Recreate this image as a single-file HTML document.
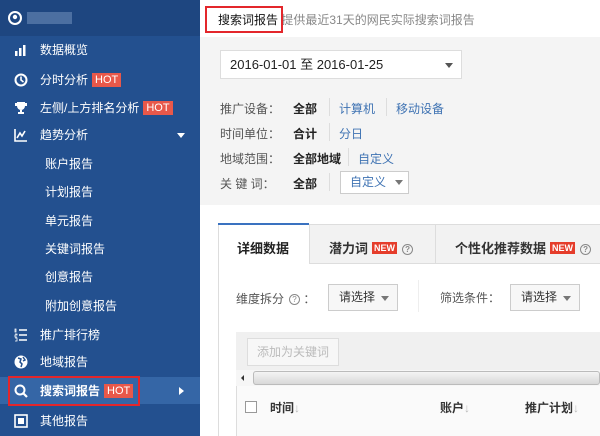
<!DOCTYPE html>
<html><head><meta charset="utf-8"><style>
*{margin:0;padding:0;box-sizing:border-box}
body{width:600px;height:436px;overflow:hidden;position:relative;font-family:"Liberation Sans","Noto Sans CJK SC",sans-serif;font-size:12px;background:#fff}
.sb{position:absolute;left:0;top:0;width:200px;height:436px;background:#23508f;color:#fff}
.sbh{position:absolute;left:0;top:0;width:200px;height:36px;background:#1e4680}
.it{position:absolute;left:0;width:200px;height:28px;line-height:28px;font-size:12px;color:#fff}
.it .ic{position:absolute;left:14px;top:7px;width:14px;height:14px}
.it .t{position:absolute;left:40px}
.sub .t{left:45px}
.hot{display:inline-block;background:#e8584a;color:#fff;font-size:11px;line-height:14px;padding:0 3px;margin-left:4px;vertical-align:1px}
.a{position:absolute}
.lbl{position:absolute;left:220px;color:#555}
.lnk{color:#3f73b3}
.b{font-weight:bold;color:#222}
.sep{position:absolute;width:1px;height:18px;background:#ddd}
.new{display:inline-block;background:#e53d2b;color:#fff;font-size:9px;line-height:12px;padding:0 2px;margin-left:4px;vertical-align:2px}
.q{display:inline-block;width:11px;height:11px;border:1px solid #888;border-radius:50%;font-size:8px;line-height:9px;text-align:center;color:#888;margin-left:5px;vertical-align:1px}
.sel{position:absolute;background:#f7f7f7;border:1px solid #ccc;height:27px;line-height:25px;padding-left:10px;color:#333;font-size:12px}
.tri{display:inline-block;width:0;height:0;border-left:4px solid transparent;border-right:4px solid transparent;border-top:5px solid #555}
</style></head><body>
<div class="sb">
<div class="sbh">
<svg class="a" style="left:8px;top:11px" width="14" height="14" viewBox="0 0 14 14"><circle cx="7" cy="7" r="6" fill="none" stroke="#fff" stroke-width="2"/><circle cx="7" cy="6" r="2.2" fill="#fff"/></svg>
<div class="a" style="left:27px;top:12px;width:45px;height:12px;background:#5779a9;opacity:.8"></div>
</div>
<div class="it" style="top:36px"><svg class="ic" viewBox="0 0 14 14"><rect x="1" y="8" width="2.5" height="5" fill="#fff"/><rect x="5" y="5" width="2.5" height="8" fill="#fff"/><rect x="9" y="2" width="2.5" height="11" fill="#fff"/></svg><span class="t">数据概览</span></div>
<div class="it" style="top:66px"><svg class="ic" viewBox="0 0 14 14"><circle cx="7" cy="7" r="5.5" fill="none" stroke="#fff" stroke-width="2"/><path d="M7 3.5V7l2.5 2" stroke="#fff" stroke-width="1.6" fill="none"/></svg><span class="t">分时分析<span class="hot">HOT</span></span></div>
<div class="it" style="top:94px"><svg class="ic" viewBox="0 0 14 14"><path d="M3 1h8v4a4 4 0 0 1-8 0z M1 2h2v3H1z M11 2h2v3h-2z M6 9h2v2h2v2H4v-2h2z" fill="#fff"/></svg><span class="t">左侧/上方排名分析<span class="hot">HOT</span></span></div>
<div class="it" style="top:121px"><svg class="ic" viewBox="0 0 14 14"><path d="M1 1v12h12" stroke="#fff" stroke-width="1.6" fill="none"/><path d="M3 10l3-5 2 3 3-5" stroke="#fff" stroke-width="1.6" fill="none"/></svg><span class="t">趋势分析</span><span class="a" style="left:177px;top:12px;border-left:4px solid transparent;border-right:4px solid transparent;border-top:5px solid #fff"></span></div>
<div class="it sub" style="top:150px"><span class="t">账户报告</span></div>
<div class="it sub" style="top:178px"><span class="t">计划报告</span></div>
<div class="it sub" style="top:207px"><span class="t">单元报告</span></div>
<div class="it sub" style="top:235px"><span class="t">关键词报告</span></div>
<div class="it sub" style="top:263px"><span class="t">创意报告</span></div>
<div class="it sub" style="top:292px"><span class="t">附加创意报告</span></div>
<div class="it" style="top:321px"><svg class="ic" viewBox="0 0 14 14"><path d="M1 1h1v3H1zM1 6h2v1H1v2h2M1 10h2v3H1" stroke="#fff" stroke-width="0.8" fill="none"/><path d="M5 2h8M5 7h8M5 12h8" stroke="#fff" stroke-width="1.6"/></svg><span class="t">推广排行榜</span></div>
<div class="it" style="top:348px"><svg class="ic" viewBox="0 0 14 14"><circle cx="7" cy="7" r="6.5" fill="#fff"/><path d="M4 3l3 1 -1 3 2 2-1 3M9 2l2 3-2 1" stroke="#23508f" stroke-width="1.5" fill="none"/></svg><span class="t">地域报告</span></div>
<div class="a" style="left:0;top:377px;width:200px;height:27px;background:#3566a6"></div>
<div class="a" style="left:8px;top:376px;width:132px;height:30px;border:2px solid #e3262b"></div>
<div class="it" style="top:377px;font-weight:bold"><svg class="ic" viewBox="0 0 14 14"><circle cx="6" cy="6" r="4.5" fill="none" stroke="#fff" stroke-width="2"/><path d="M9.5 9.5L13 13" stroke="#fff" stroke-width="2.2"/></svg><span class="t">搜索词报告<span class="hot" style="font-weight:normal">HOT</span></span><span class="a" style="left:179px;top:10px;border-top:4px solid transparent;border-bottom:4px solid transparent;border-left:5px solid #fff"></span></div>
<div class="it" style="top:407px"><svg class="ic" viewBox="0 0 14 14"><rect x="1" y="1" width="12" height="12" fill="none" stroke="#fff" stroke-width="1.6"/><rect x="4" y="4" width="6" height="6" fill="#fff"/></svg><span class="t">其他报告</span></div>
</div>

<div class="a" style="left:200px;top:37px;width:400px;height:168px;background:#f4f4f4"></div>
<div class="a" style="left:218px;top:11px;font-size:12px;color:#111">搜索词报告 <span style="color:#888">提供最近31天的网民实际搜索词报告</span></div>
<div class="a" style="left:205px;top:6px;width:78px;height:27px;border:2px solid #e3262b"></div>

<div class="a" style="left:220px;top:50px;width:242px;height:29px;background:#fff;border:1px solid #ddd;line-height:27px;padding-left:9px;font-size:13px;color:#222">2016-01-01 至 2016-01-25<span class="tri a" style="left:224px;top:12px"></span></div>

<div class="lbl" style="top:100px">推广设备：</div><div class="a b" style="left:293px;top:100px">全部</div><div class="sep" style="left:329px;top:98px"></div><div class="a lnk" style="left:339px;top:100px">计算机</div><div class="sep" style="left:386px;top:98px"></div><div class="a lnk" style="left:396px;top:100px">移动设备</div>
<div class="lbl" style="top:125px">时间单位：</div><div class="a b" style="left:293px;top:125px">合计</div><div class="sep" style="left:329px;top:123px"></div><div class="a lnk" style="left:339px;top:125px">分日</div>
<div class="lbl" style="top:150px">地域范围：</div><div class="a b" style="left:293px;top:150px">全部地域</div><div class="sep" style="left:348px;top:148px"></div><div class="a lnk" style="left:358px;top:150px">自定义</div>
<div class="lbl" style="top:175px">关&nbsp;键&nbsp;词：</div><div class="a b" style="left:293px;top:175px">全部</div><div class="sep" style="left:329px;top:173px"></div>
<div class="a" style="left:340px;top:171px;width:69px;height:23px;background:#fff;border:1px solid #ccc;line-height:21px;padding-left:9px;color:#3f73b3">自定义<span class="tri a" style="left:54px;top:8px;border-top-color:#777"></span></div>

<div class="a" style="left:218px;top:224px;width:382px;height:212px;border-left:1px solid #ddd;border-top:1px solid #ddd"></div>
<div class="a" style="left:309px;top:225px;width:291px;height:39px;background:#f2f2f2;border-bottom:1px solid #ddd"></div>
<div class="a" style="left:309px;top:225px;width:1px;height:39px;background:#ddd"></div>
<div class="a" style="left:435px;top:225px;width:1px;height:39px;background:#ddd"></div>
<div class="a" style="left:218px;top:223px;width:91px;height:2px;background:#3a72c0"></div>
<div class="a" style="left:237px;top:238px;font-size:13px;font-weight:bold;color:#222">详细数据</div>
<div class="a" style="left:329px;top:238px;font-size:13px;font-weight:bold;color:#333">潜力词<span class="new">NEW</span><span class="q">?</span></div>
<div class="a" style="left:455px;top:238px;font-size:13px;font-weight:bold;color:#333">个性化推荐数据<span class="new">NEW</span><span class="q">?</span></div>

<div class="a" style="left:236px;top:290px;color:#555">维度拆分<span class="q">?</span> ：</div>
<div class="sel" style="left:328px;top:284px;width:70px">请选择 <span class="tri a" style="left:52px;top:11px;border-top-color:#777"></span></div>
<div class="a" style="left:418px;top:280px;width:1px;height:32px;background:#eee"></div>
<div class="a" style="left:440px;top:289px;color:#555">筛选条件：</div>
<div class="sel" style="left:510px;top:284px;width:70px">请选择 <span class="tri a" style="left:52px;top:11px;border-top-color:#777"></span></div>

<div class="a" style="left:236px;top:332px;width:364px;height:104px;background:#fafafa;border-top:1px solid #ddd;border-left:1px solid #ddd"></div>
<div class="a" style="left:236px;top:332px;width:364px;height:38px;background:#f0f0f0"></div>
<div class="a" style="left:247px;top:338px;width:92px;height:28px;border:1px solid #ddd;background:#f7f7f7;color:#bbb;line-height:26px;text-align:center">添加为关键词</div>
<div class="a" style="left:236px;top:370px;width:364px;height:16px;background:#f6f6f6"></div>
<div class="a" style="left:241px;top:375px;border-top:3px solid transparent;border-bottom:3px solid transparent;border-right:3px solid #333"></div>
<div class="a" style="left:253px;top:371px;width:347px;height:14px;border:1px solid #bbb;border-radius:3px;background:linear-gradient(#f4f4f4,#d8d8d8)"></div>
<div class="a" style="left:245px;top:401px;width:12px;height:12px;border:1px solid #999;background:#fff"></div>
<div class="a" style="left:270px;top:399px;font-weight:bold;color:#333">时间<span style="color:#bbb">↓</span></div>
<div class="a" style="left:440px;top:399px;font-weight:bold;color:#333">账户<span style="color:#bbb">↓</span></div>
<div class="a" style="left:525px;top:399px;font-weight:bold;color:#333">推广计划<span style="color:#bbb">↓</span></div>
</body></html>
